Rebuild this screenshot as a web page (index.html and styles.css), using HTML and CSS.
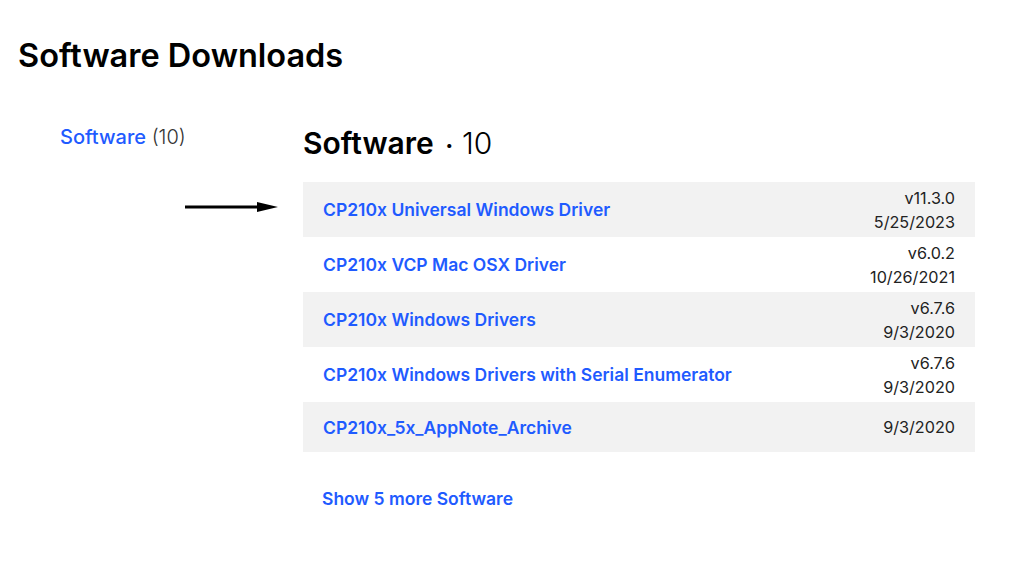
FILE: index.html
```html
<!DOCTYPE html>
<html lang="en">
<head>
<meta charset="utf-8">
<title>Software Downloads</title>
<link rel="stylesheet" href="styles.css">
</head>
<body>
<main class="page">
  <h1 class="page-title">Software Downloads</h1>
  <div class="layout">
    <aside class="sidebar">
      <a class="nav-link" href="#">Software</a> <span class="nav-count">(10)</span>
      <div class="pointer">
        <svg width="94" height="14" viewBox="0 0 94 14" aria-hidden="true">
          <line x1="0" y1="7" x2="76" y2="7" stroke="#000" stroke-width="3" stroke-linecap="round"/>
          <polygon points="72,2 93,7 72,12" fill="#000"/>
        </svg>
      </div>
    </aside>
    <section class="content">
      <h2 class="section-title">Software <span class="dot">·</span> <span class="count">10</span></h2>
      <ul class="list">
        <li class="row">
          <a class="row-title" href="#">CP210x Universal Windows Driver</a>
          <div class="meta"><span>v11.3.0</span><span>5/25/2023</span></div>
        </li>
        <li class="row">
          <a class="row-title" href="#">CP210x VCP Mac OSX Driver</a>
          <div class="meta"><span>v6.0.2</span><span>10/26/2021</span></div>
        </li>
        <li class="row">
          <a class="row-title" href="#">CP210x Windows Drivers</a>
          <div class="meta"><span>v6.7.6</span><span>9/3/2020</span></div>
        </li>
        <li class="row">
          <a class="row-title" href="#">CP210x Windows Drivers with Serial Enumerator</a>
          <div class="meta"><span>v6.7.6</span><span>9/3/2020</span></div>
        </li>
        <li class="row">
          <a class="row-title" href="#">CP210x_5x_AppNote_Archive</a>
          <div class="meta"><span>9/3/2020</span></div>
        </li>
      </ul>
      <a class="more" href="#">Show 5 more Software</a>
    </section>
  </div>
</main>
</body>
</html>
```

FILE: styles.css
```css
* { box-sizing: border-box; }
html, body { margin: 0; padding: 0; background: #fff; }
body {
  font-family: Inter, "Noto Sans", sans-serif;
  color: #111;
}
a { text-decoration: none; }
.page { padding: 36px 0 0 18px; }
.page-title {
  margin: 0;
  font-size: 32.5px;
  font-weight: 600;
  line-height: 39px;
  color: #000;
}
.layout {
  display: flex;
  margin-top: 49px;
}
.sidebar {
  width: 285px;
  padding: 2px 0 0 42px;
  font-size: 20px;
  line-height: 22px;
}
.nav-link { color: #1f5bff; font-weight: 500; }
.nav-count { color: #333; font-weight: 300; }
.pointer { margin: 52px 0 0 125px; line-height: 0; }
.content { width: 672px; padding-top: 2px; }
.section-title {
  margin: 0 0 19px;
  font-size: 30px;
  font-weight: 600;
  line-height: 34px;
  color: #000;
}
.section-title .dot { font-weight: 700; font-size: 24px; padding: 0 1px 0 4px; }
.section-title .count { font-weight: 300; }
.list { list-style: none; margin: 0; padding: 0; }
.row {
  display: flex;
  align-items: center;
  justify-content: space-between;
  min-height: 50px;
}
.row:nth-child(odd) { background: #f2f2f2; }
.row:nth-child(1), .row:nth-child(2), .row:nth-child(3), .row:nth-child(4) { min-height: 55px; }
.row-title {
  padding: 0 20px;
  font-size: 17.5px;
  font-weight: 600;
  color: #1f5bff;
}
.meta {
  display: flex;
  flex-direction: column;
  align-items: flex-end;
  padding: 3px 20px;
  font-size: 16.2px;
  line-height: 24px;
  color: #222;
}
.more {
  display: inline-block;
  margin: 36px 0 0 19px;
  font-size: 17.5px;
  font-weight: 600;
  color: #1f5bff;
}
```
